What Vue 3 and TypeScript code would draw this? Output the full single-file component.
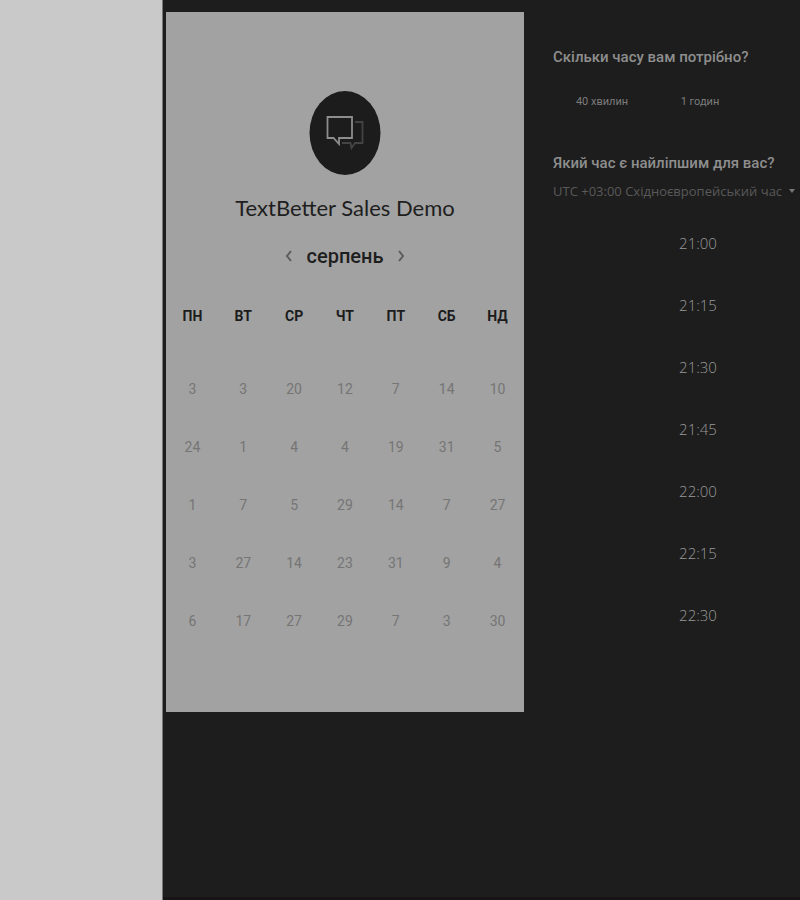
<script setup lang="ts">
import { ref } from 'vue'

const weekdays: string[] = ['ПН', 'ВТ', 'СР', 'ЧТ', 'ПТ', 'СБ', 'НД']
const weeks: number[][] = [
  [3, 3, 20, 12, 7, 14, 10],
  [24, 1, 4, 4, 19, 31, 5],
  [1, 7, 5, 29, 14, 7, 27],
  [3, 27, 14, 23, 31, 9, 4],
  [6, 17, 27, 29, 7, 3, 30],
]
const durations: string[] = ['40 хвилин', '1 годин']
const slots: string[] = ['21:00', '21:15', '21:30', '21:45', '22:00', '22:15', '22:30']
const zone = ref<string>('UTC +03:00 Східноєвропейський час')
</script>

<template>
  <div class="page">
    <div class="gutter"></div>
    <main class="booking">
      <section class="calendar">
        <svg class="logo" viewBox="0 0 72 84" aria-hidden="true">
          <ellipse cx="36" cy="42" rx="35.5" ry="42" fill="#1c1c1c" />
          <path d="M46 31H53.5V52H46L42.5 57L41.5 52H33" fill="none" stroke="#444" stroke-width="1.8" />
          <path d="M18.5 26H43V47H30V53L24.5 47H18.5Z" fill="none" stroke="#8d8d8d" stroke-width="1.8" />
        </svg>
        <h1 class="title">TextBetter Sales Demo</h1>
        <div class="month">
          <button type="button" class="arrow" aria-label="Попередній місяць">
            <svg viewBox="0 0 8 12"><path d="M6 1L2 6L6 11" /></svg>
          </button>
          <h2 class="month-name">серпень</h2>
          <button type="button" class="arrow" aria-label="Наступний місяць">
            <svg viewBox="0 0 8 12"><path d="M2 1L6 6L2 11" /></svg>
          </button>
        </div>
        <table class="days">
          <thead>
            <tr>
              <th v-for="day in weekdays" :key="day" scope="col">{{ day }}</th>
            </tr>
          </thead>
          <tbody>
            <tr v-for="(week, w) in weeks" :key="w">
              <td v-for="(date, d) in week" :key="d">
                <button type="button" class="date">{{ date }}</button>
              </td>
            </tr>
          </tbody>
        </table>
      </section>

      <section class="options">
        <h3 class="question">Скільки часу вам потрібно?</h3>
        <div class="durations">
          <button v-for="item in durations" :key="item" type="button" class="duration">{{ item }}</button>
        </div>
        <h3 class="question">Який час є найліпшим для вас?</h3>
        <div class="zone">
          <select v-model="zone" class="zone-select" aria-label="Часовий пояс">
            <option>UTC +03:00 Східноєвропейський час</option>
          </select>
          <svg class="caret" viewBox="0 0 6 4" aria-hidden="true"><path d="M0 0H6L3 4Z" /></svg>
        </div>
        <ul class="slots">
          <li v-for="slot in slots" :key="slot">
            <button type="button" class="slot">{{ slot }}</button>
          </li>
        </ul>
      </section>
    </main>
  </div>
</template>

<style>
body {
  margin: 0;
  background: #1c1c1c;
}
</style>

<style scoped>
.page {
  display: grid;
  grid-template-columns: minmax(0, 163fr) minmax(0, 637fr);
  min-height: 100vh;
  background: #1d1d1d;
  font-family: Roboto, "Liberation Sans", sans-serif;
  overflow: hidden;
}
button {
  padding: 0;
  border: 0;
  background: none;
  font: inherit;
  color: inherit;
  cursor: pointer;
}
h1, h2, h3 {
  margin: 0;
  font-weight: 400;
}
.gutter {
  background: #c9c9c9;
  border-right: 1px solid #777;
}
.booking {
  display: grid;
  grid-template-columns: minmax(0, 358fr) minmax(0, 276fr);
  align-items: start;
  padding: 12px 0 0 3px;
  border-bottom: 3px solid #171316;
}
.calendar {
  display: flex;
  flex-direction: column;
  align-items: center;
  padding: 79px 1px 62px;
  background: #a2a2a2;
}
.logo {
  width: 72px;
  height: 84px;
}
.title {
  margin-top: 17px;
  font-family: Lato, sans-serif;
  font-size: 22px;
  line-height: 32px;
  color: #1e1e1e;
  white-space: nowrap;
}
.month {
  display: flex;
  align-items: center;
  gap: 14px;
  margin-top: 16px;
}
.month-name {
  font-size: 20px;
  font-weight: 500;
  line-height: 32px;
  color: #1e1e1e;
}
.arrow {
  display: flex;
}
.arrow svg {
  width: 8px;
  height: 12px;
  fill: none;
  stroke: #5c5c5c;
  stroke-width: 2;
}
.days {
  width: 100%;
  margin-top: 28px;
  table-layout: fixed;
  border-collapse: collapse;
}
.days th {
  height: 60px;
  padding: 0;
  vertical-align: top;
  font-size: 14px;
  line-height: 32px;
  font-weight: 700;
  color: #1c1c1c;
}
.days td {
  height: 58px;
  padding: 0;
  text-align: center;
}
.date {
  width: 40px;
  height: 40px;
  font-size: 14px;
  color: #757575;
}
.options {
  padding: 33px 0 0 29px;
}
.question {
  font-size: 15px;
  font-weight: 500;
  line-height: 24px;
  color: #8e8e8e;
  white-space: nowrap;
}
.durations {
  display: flex;
  margin: 20px 0 38px;
}
.duration {
  width: 98px;
  height: 24px;
  font-size: 11px;
  font-weight: 400;
  color: #7c7c7c;
}
.zone {
  display: flex;
  align-items: center;
  gap: 6px;
  height: 32px;
}
.zone-select {
  appearance: none;
  padding: 0;
  border: 0;
  background: none;
  font: 400 13px/20px "Open Sans", sans-serif;
  color: #595959;
}
.caret {
  flex: none;
  width: 6px;
  height: 4px;
  fill: #777;
}
.slots {
  margin: 5px 0 0;
  padding: 0 0 0 12px;
  list-style: none;
}
.slot {
  width: 266px;
  height: 62px;
  font-family: "Open Sans", sans-serif;
  font-size: 15px;
  font-weight: 300;
  color: #999;
}
</style>
